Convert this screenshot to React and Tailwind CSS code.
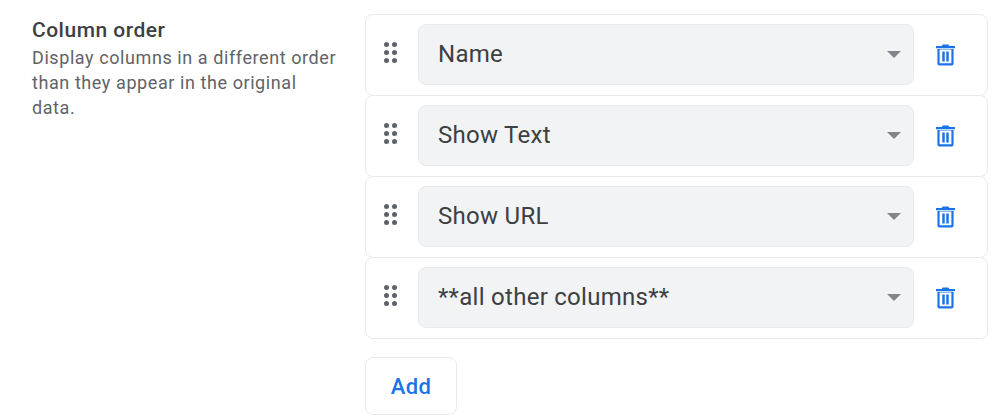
const columns = ['Name', 'Show Text', 'Show URL', '**all other columns**']

function DragHandle() {
  return (
    <svg width="13" height="21" viewBox="0 0 13 21" className="flex-none text-[#5f6368]" fill="currentColor">
      <circle cx="2.5" cy="2.6" r="2.5" />
      <circle cx="10.5" cy="2.6" r="2.5" />
      <circle cx="2.5" cy="10.5" r="2.5" />
      <circle cx="10.5" cy="10.5" r="2.5" />
      <circle cx="2.5" cy="18.4" r="2.5" />
      <circle cx="10.5" cy="18.4" r="2.5" />
    </svg>
  )
}

function TrashIcon() {
  return (
    <svg width="19" height="22" viewBox="0 0 20 22" preserveAspectRatio="none" className="flex-none text-[#1a73e8]" fill="currentColor">
      <path d="M7 0.5h6l1 1.5h6v2.2H0V2h6z" />
      <path fillRule="evenodd" d="M1.5 5h17v14.5a2 2 0 0 1-2 2h-13a2 2 0 0 1-2-2zM3.8 5.5v13.8h12.4V5.5z" />
      <rect x="6.6" y="7.5" width="2.6" height="10" />
      <rect x="10.8" y="7.5" width="2.6" height="10" />
    </svg>
  )
}

function ColumnRow({ label, first }) {
  return (
    <div className={`flex h-[82px] items-start rounded-lg border border-[#e8eaed] bg-white ${first ? '' : '-mt-px'}`}>
      <div className="ml-[18px] mt-[26.5px] flex w-[34px] flex-none">
        <DragHandle />
      </div>
      <div className="mt-[9px] flex h-[61px] w-[496px] flex-none items-center justify-between rounded-lg border border-[#e8eaed] bg-[#f1f3f4] pl-[19px] pr-[12px]">
        <span className="-mt-px text-[24px] tracking-[0.28px] text-[#3c4043]">{label}</span>
        <span className="h-0 w-0 border-x-[7.5px] border-t-[7.5px] border-x-transparent border-t-[#80868b]" />
      </div>
      <div className="ml-[22px] mt-[28.5px] flex">
        <TrashIcon />
      </div>
    </div>
  )
}

export default function App() {
  return (
    <div className="flex h-[418px] w-[999px] overflow-hidden bg-white font-['Roboto',sans-serif]">
      <div className="ml-[32px] mt-[16px] w-[333px] flex-none">
        <h2 className="text-[21px] font-medium leading-[29px] tracking-[0.5px] text-[#3c4043]">Column order</h2>
        <p className="w-[308px] text-[18px] leading-[25px] tracking-[0.58px] text-[#5f6368]">
          Display columns in a different order than they appear in the original data.
        </p>
      </div>
      <div className="mt-[14px] w-[623px] flex-none">
        {columns.map((c, i) => (
          <ColumnRow key={c} label={c} first={i === 0} />
        ))}
        <button className="mt-[18px] h-[58px] w-[92px] rounded-lg border border-[#e8eaed] bg-white text-[22px] font-medium tracking-[0.3px] text-[#1a73e8]">
          Add
        </button>
      </div>
    </div>
  )
}
